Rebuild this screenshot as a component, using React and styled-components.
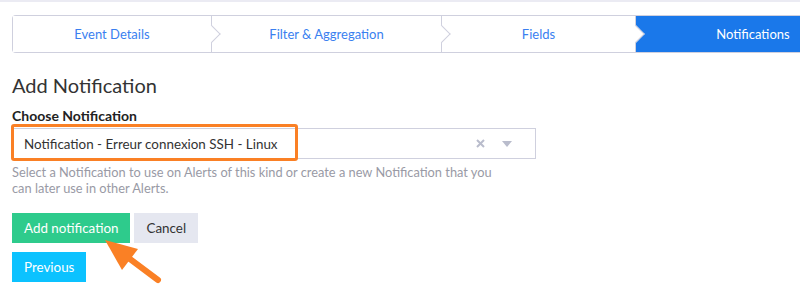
import React from 'react';
import styled, { createGlobalStyle } from 'styled-components';

const GlobalStyle = createGlobalStyle`
  html, body {
    margin: 0;
    padding: 0;
    background: #ffffff;
  }
  body {
    font-family: Lato, "Open Sans", sans-serif;
    font-size: 13px;
    color: #333;
  }
`;

const Page = styled.div`
  position: relative;
  width: 800px;
  height: 292px;
  overflow: hidden;
  border-top: 2px solid #ebebf3;
  box-sizing: border-box;
  padding: 13px 0 0 12px;
`;

const Steps = styled.div`
  display: flex;
  height: 38px;
  border: 1px solid #cfd0de;
  border-right: none;
  border-radius: 4px 0 0 4px;
  width: 870px;
  box-sizing: border-box;
`;

const Step = styled.div`
  position: relative;
  flex: 0 0 ${p => p.w}px;
  display: flex;
  align-items: center;
  justify-content: center;
  box-sizing: border-box;
  font-size: 13px;
  color: ${p => (p.active ? '#ffffff' : '#3a7ff0')};
  background: ${p => (p.active ? '#1a78ea' : '#ffffff')};
  border-right: ${p => (p.active ? 'none' : '1px solid #cfd0de')};

  &::after {
    content: ${p => (p.last ? 'none' : "''")};
    position: absolute;
    right: -7px;
    top: 50%;
    width: 12px;
    height: 12px;
    background: #ffffff;
    border-top: 1px solid #cfd0de;
    border-right: 1px solid #cfd0de;
    transform: translateY(-50%) rotate(45deg);
    z-index: 2;
  }
`;

const Content = styled.div`
  padding-top: 20px;
`;

const Title = styled.h2`
  margin: 0 0 11px;
  font-size: 20px;
  font-weight: 400;
  color: #333;
  line-height: 24px;
`;

const Label = styled.div`
  font-weight: 700;
  font-size: 14px;
  color: #222;
  line-height: 16px;
  margin-bottom: 4px;
`;

const Select = styled.div`
  width: 524px;
  height: 31px;
  box-sizing: border-box;
  border: 1px solid #cfd0de;
  display: flex;
  align-items: center;
  padding: 0 12px 0 11px;
  font-size: 13.4px;
  color: #333;
`;

const SelectValue = styled.span`
  flex: 1;
`;

const Clear = styled.svg`
  margin-right: 17px;
`;

const Caret = styled.span`
  width: 0;
  height: 0;
  border-left: 5px solid transparent;
  border-right: 5px solid transparent;
  border-top: 6px solid #b9bccc;
  margin-right: 11px;
`;

const Help = styled.p`
  margin: 5px 0 0;
  width: 500px;
  font-size: 12.8px;
  line-height: 16px;
  color: #999aa5;
`;

const ButtonRow = styled.div`
  display: flex;
  gap: 4px;
  margin-top: ${p => p.top}px;
`;

const Button = styled.button`
  height: 30px;
  border: none;
  border-radius: 0;
  padding: 0 ${p => p.px || 12}px;
  font-family: inherit;
  font-size: 13.4px;
  background: ${p => p.bg};
  color: ${p => p.fg || '#ffffff'};
`;

const Highlight = styled.div`
  position: absolute;
  left: 11px;
  top: 122px;
  width: 287px;
  height: 37px;
  box-sizing: border-box;
  border: 3px solid #fa8025;
  border-radius: 3px;
`;

const Arrow = styled.svg`
  position: absolute;
  left: 100px;
  top: 232px;
`;

export default function App() {
  return (
    <>
      <GlobalStyle />
      <Page>
        <Steps>
          <Step w={199}>Event Details</Step>
          <Step w={230}>Filter &amp; Aggregation</Step>
          <Step w={194}>Fields</Step>
          <Step w={234} active last>Notifications</Step>
        </Steps>
        <Content>
          <Title>Add Notification</Title>
          <Label>Choose Notification</Label>
          <Select>
            <SelectValue>Notification - Erreur connexion SSH - Linux</SelectValue>
            <Clear width="9" height="9" viewBox="0 0 9 9">
              <path d="M1 1 L8 8 M8 1 L1 8" stroke="#b9bccc" strokeWidth="2" />
            </Clear>
            <Caret />
          </Select>
          <Help>
            Select a Notification to use on Alerts of this kind or create a new Notification that you can later use in other Alerts.
          </Help>
          <ButtonRow top={17}>
            <Button bg="#2ecb8c">Add notification</Button>
            <Button bg="#e5e7f0" fg="#333">Cancel</Button>
          </ButtonRow>
          <ButtonRow top={9}>
            <Button bg="#0cc2ff">Previous</Button>
          </ButtonRow>
        </Content>
        <Highlight />
        <Arrow width="70" height="56" viewBox="0 0 70 56">
          <line x1="58" y1="46" x2="26" y2="22" stroke="#fa8025" strokeWidth="6" strokeLinecap="round" />
          <polygon points="5,6 38,15 22,36" fill="#fa8025" />
        </Arrow>
      </Page>
    </>
  );
}
